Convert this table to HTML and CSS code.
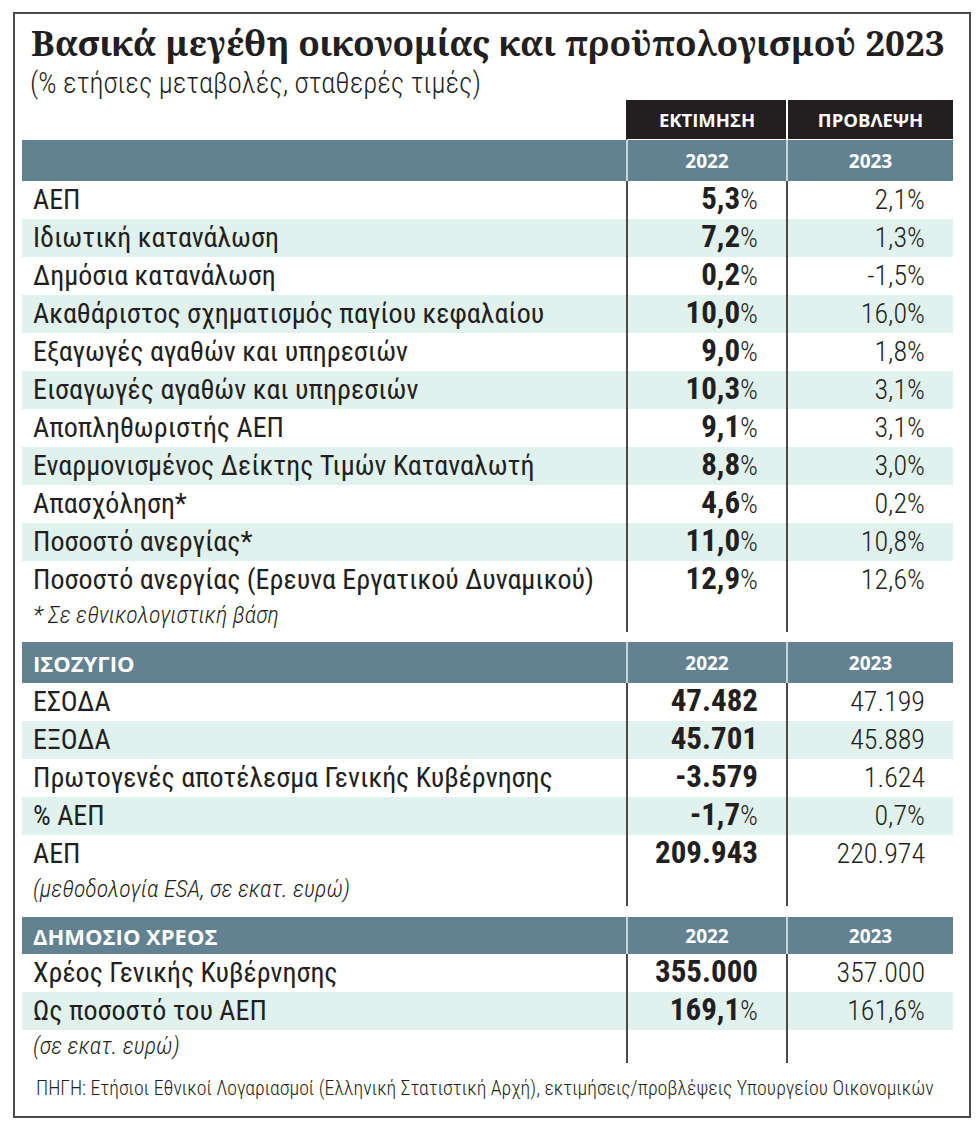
FILE: index.html
```html
<!DOCTYPE html>
<html lang="el">
<head>
  <meta charset="UTF-8" />
  <meta name="viewport" content="width=device-width, initial-scale=1.0"/>
  <title>Βασικά μεγέθη οικονομίας και προϋπολογισμού 2023</title>
  <link rel="stylesheet" href="styles.css">
</head>
<body>
  <div class="chart">
    <h1 class="title">Βασικά μεγέθη οικονομίας και προϋπολογισμού 2023</h1>
    <p class="subtitle">(% ετήσιες μεταβολές, σταθερές τιμές)</p>

    <table class="data">
      <colgroup><col class="c-label"><col class="c-mid"><col class="c-end"></colgroup>
      <thead>
        <tr class="kind"><th></th><th>ΕΚΤΙΜΗΣΗ</th><th>ΠΡΟΒΛΕΨΗ</th></tr>
        <tr class="head"><th></th><th>2022</th><th>2023</th></tr>
      </thead>
      <tbody>
        <tr><td>ΑΕΠ</td><td><b>5,3</b>%</td><td>2,1%</td></tr>
        <tr><td>Ιδιωτική κατανάλωση</td><td><b>7,2</b>%</td><td>1,3%</td></tr>
        <tr><td>Δημόσια κατανάλωση</td><td><b>0,2</b>%</td><td>-1,5%</td></tr>
        <tr><td>Ακαθάριστος σχηματισμός παγίου κεφαλαίου</td><td><b>10,0</b>%</td><td>16,0%</td></tr>
        <tr><td>Εξαγωγές αγαθών και υπηρεσιών</td><td><b>9,0</b>%</td><td>1,8%</td></tr>
        <tr><td>Εισαγωγές αγαθών και υπηρεσιών</td><td><b>10,3</b>%</td><td>3,1%</td></tr>
        <tr><td>Αποπληθωριστής ΑΕΠ</td><td><b>9,1</b>%</td><td>3,1%</td></tr>
        <tr><td>Εναρμονισμένος Δείκτης Τιμών Καταναλωτή</td><td><b>8,8</b>%</td><td>3,0%</td></tr>
        <tr><td>Απασχόληση*</td><td><b>4,6</b>%</td><td>0,2%</td></tr>
        <tr><td>Ποσοστό ανεργίας*</td><td><b>11,0</b>%</td><td>10,8%</td></tr>
        <tr><td>Ποσοστό ανεργίας (Ερευνα Εργατικού Δυναμικού)</td><td><b>12,9</b>%</td><td>12,6%</td></tr>
        <tr class="note"><td>* Σε εθνικολογιστική βάση</td><td></td><td></td></tr>
      </tbody>
    </table>

    <table class="data section">
      <colgroup><col class="c-label"><col class="c-mid"><col class="c-end"></colgroup>
      <thead>
        <tr class="head"><th>ΙΣΟΖΥΓΙΟ</th><th>2022</th><th>2023</th></tr>
      </thead>
      <tbody>
        <tr><td>ΕΣΟΔΑ</td><td><b>47.482</b></td><td>47.199</td></tr>
        <tr><td>ΕΞΟΔΑ</td><td><b>45.701</b></td><td>45.889</td></tr>
        <tr><td>Πρωτογενές αποτέλεσμα Γενικής Κυβέρνησης</td><td><b>-3.579</b></td><td>1.624</td></tr>
        <tr><td>% ΑΕΠ</td><td><b>-1,7</b>%</td><td>0,7%</td></tr>
        <tr><td>ΑΕΠ</td><td><b>209.943</b></td><td>220.974</td></tr>
        <tr class="note"><td>(μεθοδολογία ESA, σε εκατ. ευρώ)</td><td></td><td></td></tr>
      </tbody>
    </table>

    <table class="data section debt">
      <colgroup><col class="c-label"><col class="c-mid"><col class="c-end"></colgroup>
      <thead>
        <tr class="head"><th>ΔΗΜΟΣΙΟ ΧΡΕΟΣ</th><th>2022</th><th>2023</th></tr>
      </thead>
      <tbody>
        <tr><td>Χρέος Γενικής Κυβέρνησης</td><td><b>355.000</b></td><td>357.000</td></tr>
        <tr><td>Ως ποσοστό του ΑΕΠ</td><td><b>169,1</b>%</td><td>161,6%</td></tr>
        <tr class="note"><td>(σε εκατ. ευρώ)</td><td></td><td></td></tr>
      </tbody>
    </table>

    <p class="source">ΠΗΓΗ: Ετήσιοι Εθνικοί Λογαριασμοί (Ελληνική Στατιστική Αρχή), εκτιμήσεις/προβλέψεις Υπουργείου Οικονομικών</p>
  </div>
</body>
</html>
```

FILE: styles.css
```css
* {
  box-sizing: border-box;
}

body {
  margin: 0;
  background: #fff;
  color: #231f20;
  font-family: "Roboto Condensed", "Roboto", sans-serif;
}

.chart {
  width: 958px;
  margin: 12px 0 0 13px;
  border: 2px solid #4a4a4a;
  padding: 6px 16px 15px 7px;
}

.title {
  margin: 0;
  padding-left: 9px;
  font-family: "Noto Serif", "Liberation Serif", serif;
  font-size: 35.2px;
  font-weight: bold;
  line-height: 44px;
  color: #231f20;
}

.subtitle {
  margin: 0;
  padding: 3px 0 0 8px;
  font-size: 28.6px;
  font-weight: 300;
  line-height: 33px;
}

.data {
  width: 931px;
  border-collapse: separate;
  border-spacing: 0;
  table-layout: fixed;
}

.c-label {
  width: 604px;
}

.c-mid {
  width: 160px;
}

.c-end {
  width: 167px;
}

.data td {
  height: 38px;
  padding: 0 28px 0 11px;
  font-size: 28px;
  line-height: 38px;
  white-space: nowrap;
}

.data td + td {
  border-left: 2px solid #4a4a4a;
  text-align: right;
  font-weight: 300;
}

.data td b {
  font-size: 31px;
  font-weight: bold;
  line-height: 1;
}

.data tbody tr:nth-child(even):not(.note) {
  background: #e1f1ed;
}

.data .note td {
  height: 33px;
  font-size: 24px;
  font-style: italic;
  font-weight: 300;
  line-height: 33px;
}

/* black labels over the two value columns */
.kind th {
  height: 40px;
  padding: 0;
  border-bottom: 1px solid #fff;
  font-family: "Open Sans", sans-serif;
  font-size: 18.5px;
  font-weight: bold;
  color: #fff;
  background: #231f20;
}

.kind th:first-child {
  background: none;
}

.kind th + th {
  border-left: 2px solid transparent;
}

.kind th + th + th {
  border-left-color: #fff;
}

.head th {
  height: 41px;
  padding: 0 0 0 11px;
  font-family: "Open Sans", sans-serif;
  font-size: 22px;
  font-weight: bold;
  text-align: left;
  color: #fff;
  background: #638291;
}

.head th + th {
  padding: 0;
  border-left: 2px solid #c8d3d8;
  font-size: 19px;
  text-align: center;
}

.section {
  margin-top: 10px;
}

.debt {
  margin-top: 11px;
}

.debt .head th {
  height: 37px;
}

.source {
  margin: 14px 0 0;
  padding-left: 14px;
  font-size: 19.8px;
  font-weight: 300;
  line-height: 24px;
}
```
